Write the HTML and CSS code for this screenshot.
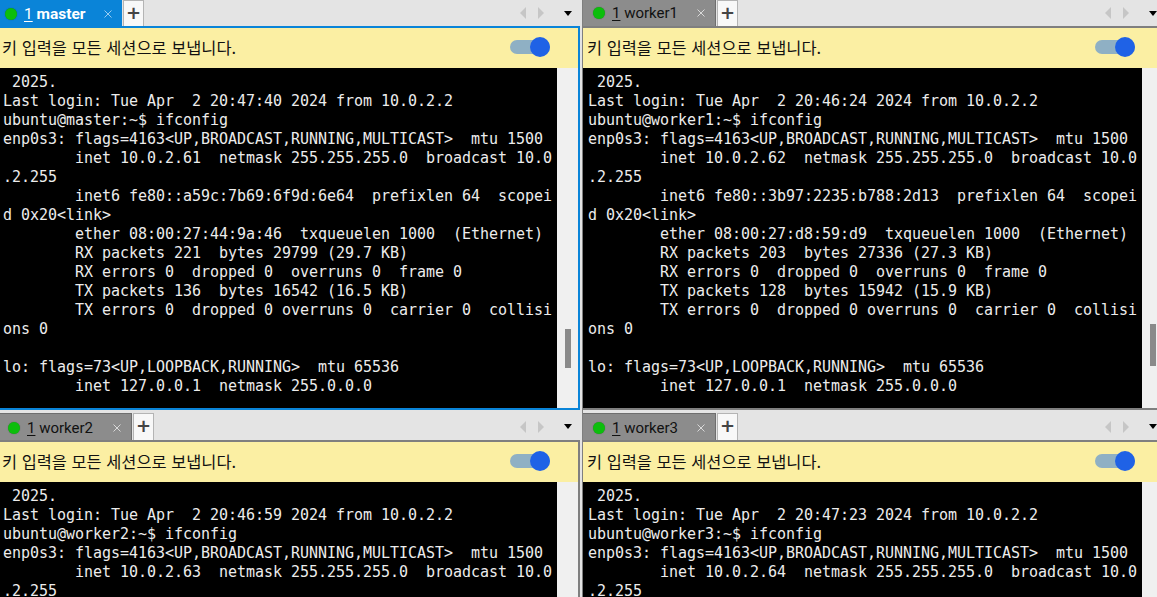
FILE: index.html
```html
<!DOCTYPE html>
<html lang="ko">
<head>
<meta charset="utf-8">
<title>Sessions</title>
<link rel="stylesheet" href="styles.css">
</head>
<body>
<main class="grid">
  <section class="pane pane-top pane-left pane-focus">
    <div class="tabbar">
      <div class="tab tab-active"><span class="dot"></span><span class="title"><u>1</u> master</span><svg class="close" viewBox="0 0 8 8"><path d="M.5.5l7 7M7.5.5l-7 7"/></svg></div>
      <div class="plus">+</div>
      <div class="tabctl"><span class="arr arr-l"></span><span class="arr arr-r"></span><span class="menu"></span></div>
    </div>
    <div class="notice"><span>키 입력을 모든 세션으로 보냅니다.</span><span class="toggle"><span class="knob"></span></span></div>
    <div class="body">
<pre class="term"> 2025.
Last login: Tue Apr  2 20:47:40 2024 from 10.0.2.2
ubuntu@master:~$ ifconfig
enp0s3: flags=4163&lt;UP,BROADCAST,RUNNING,MULTICAST&gt;  mtu 1500
        inet 10.0.2.61  netmask 255.255.255.0  broadcast 10.0
.2.255
        inet6 fe80::a59c:7b69:6f9d:6e64  prefixlen 64  scopei
d 0x20&lt;link&gt;
        ether 08:00:27:44:9a:46  txqueuelen 1000  (Ethernet)
        RX packets 221  bytes 29799 (29.7 KB)
        RX errors 0  dropped 0  overruns 0  frame 0
        TX packets 136  bytes 16542 (16.5 KB)
        TX errors 0  dropped 0 overruns 0  carrier 0  collisi
ons 0

lo: flags=73&lt;UP,LOOPBACK,RUNNING&gt;  mtu 65536
        inet 127.0.0.1  netmask 255.0.0.0</pre>
      <div class="scroll"><span class="thumb"></span></div>
    </div>
  </section>
  <section class="pane pane-top pane-right">
    <div class="tabbar">
      <div class="tab"><span class="dot"></span><span class="title"><u>1</u> worker1</span><svg class="close" viewBox="0 0 8 8"><path d="M.5.5l7 7M7.5.5l-7 7"/></svg></div>
      <div class="plus">+</div>
      <div class="tabctl"><span class="arr arr-l"></span><span class="arr arr-r"></span><span class="menu"></span></div>
    </div>
    <div class="notice"><span>키 입력을 모든 세션으로 보냅니다.</span><span class="toggle"><span class="knob"></span></span></div>
    <div class="body">
<pre class="term"> 2025.
Last login: Tue Apr  2 20:46:24 2024 from 10.0.2.2
ubuntu@worker1:~$ ifconfig
enp0s3: flags=4163&lt;UP,BROADCAST,RUNNING,MULTICAST&gt;  mtu 1500
        inet 10.0.2.62  netmask 255.255.255.0  broadcast 10.0
.2.255
        inet6 fe80::3b97:2235:b788:2d13  prefixlen 64  scopei
d 0x20&lt;link&gt;
        ether 08:00:27:d8:59:d9  txqueuelen 1000  (Ethernet)
        RX packets 203  bytes 27336 (27.3 KB)
        RX errors 0  dropped 0  overruns 0  frame 0
        TX packets 128  bytes 15942 (15.9 KB)
        TX errors 0  dropped 0 overruns 0  carrier 0  collisi
ons 0

lo: flags=73&lt;UP,LOOPBACK,RUNNING&gt;  mtu 65536
        inet 127.0.0.1  netmask 255.0.0.0</pre>
      <div class="scroll"><span class="thumb"></span></div>
    </div>
  </section>
  <section class="pane pane-bottom pane-left">
    <div class="tabbar">
      <div class="tab"><span class="dot"></span><span class="title"><u>1</u> worker2</span><svg class="close" viewBox="0 0 8 8"><path d="M.5.5l7 7M7.5.5l-7 7"/></svg></div>
      <div class="plus">+</div>
      <div class="tabctl"><span class="arr arr-l"></span><span class="arr arr-r"></span><span class="menu"></span></div>
    </div>
    <div class="notice"><span>키 입력을 모든 세션으로 보냅니다.</span><span class="toggle"><span class="knob"></span></span></div>
    <div class="body">
<pre class="term"> 2025.
Last login: Tue Apr  2 20:46:59 2024 from 10.0.2.2
ubuntu@worker2:~$ ifconfig
enp0s3: flags=4163&lt;UP,BROADCAST,RUNNING,MULTICAST&gt;  mtu 1500
        inet 10.0.2.63  netmask 255.255.255.0  broadcast 10.0
.2.255</pre>
      <div class="scroll"></div>
    </div>
  </section>
  <section class="pane pane-bottom pane-right">
    <div class="tabbar">
      <div class="tab"><span class="dot"></span><span class="title"><u>1</u> worker3</span><svg class="close" viewBox="0 0 8 8"><path d="M.5.5l7 7M7.5.5l-7 7"/></svg></div>
      <div class="plus">+</div>
      <div class="tabctl"><span class="arr arr-l"></span><span class="arr arr-r"></span><span class="menu"></span></div>
    </div>
    <div class="notice"><span>키 입력을 모든 세션으로 보냅니다.</span><span class="toggle"><span class="knob"></span></span></div>
    <div class="body">
<pre class="term"> 2025.
Last login: Tue Apr  2 20:47:23 2024 from 10.0.2.2
ubuntu@worker3:~$ ifconfig
enp0s3: flags=4163&lt;UP,BROADCAST,RUNNING,MULTICAST&gt;  mtu 1500
        inet 10.0.2.64  netmask 255.255.255.0  broadcast 10.0
.2.255</pre>
      <div class="scroll"></div>
    </div>
  </section>
</main>
</body>
</html>
```
FILE: styles.css
```css
* { box-sizing: border-box; }
html, body { margin: 0; height: 100%; overflow: hidden; background: #e4e4e4; }
.grid {
  width: 1163px;
  height: 597px;
  display: grid;
  grid-template-columns: 580px 581px;
  grid-template-rows: 410px 187px;
  column-gap: 2px;
  font-family: Roboto, "Noto Sans CJK KR", sans-serif;
}
.pane { display: flex; flex-direction: column; min-width: 0; overflow: hidden; background: #e4e4e4; }
.pane-right { border-left: 1px solid #7f7f7f; }
.pane-bottom { padding-top: 3px; }
.tabbar {
  height: 28px;
  flex: none;
  display: flex;
  align-items: stretch;
  background: #e4e4e4;
  border-bottom: 2px solid #7f7f7f;
}
.pane-bottom .tabbar { height: 29px; }
.pane-left.pane-bottom .notice,
.pane-left.pane-bottom .body { border-right: 2px solid #7f7f7f; }
.pane-focus .notice,
.pane-focus .body { border-right: 2px solid #0a84d8; }
.pane-focus .body { border-bottom: 2px solid #0a84d8; }
.pane-focus .tabbar { border-bottom-color: #0a84d8; }
.pane-top.pane-right .body { border-bottom: 2px solid #7f7f7f; }
.tab {
  width: 133px;
  display: flex;
  align-items: center;
  background: #8c8c8c;
  color: #111;
  font-size: 15px;
  padding-left: 10px;
  border-right: 1px solid #6e6e6e;
}
.pane-bottom .tab { border-top: 1px solid #6e6e6e; padding-top: 1px; }
.pane-left .tab { width: 132px; padding-left: 8px; }
.pane-left .tab-active {
  width: 122px;
  padding-left: 5px;
  background: #0a84d8;
  color: #fff;
  font-size: 15.5px;
  font-weight: 700;
  border-right: 0;
  margin-bottom: -2px;
}
.dot {
  width: 12px;
  height: 12px;
  border-radius: 50%;
  background: #0cbe0c;
  box-shadow: 0 0 1px rgba(0, 0, 0, .45);
  margin-right: 7px;
  flex: none;
}
.title { flex: 1; white-space: nowrap; }
.title u { text-underline-offset: 2px; font-weight: 400; }
.close { width: 8px; height: 8px; margin-right: 10px; flex: none; fill: none; stroke: #e2e2e2; stroke-width: .9; }
.tab-active .close { stroke: #a9d6f5; }
.plus {
  width: 21px;
  margin-left: 1px;
  background: #f8f8f8;
  border: 1px solid #b4b4b4;
  border-bottom: 0;
  color: #444;
  font: 700 18px/24px "DejaVu Sans", sans-serif;
  text-align: center;
}
.tabctl { margin-left: auto; display: flex; align-items: center; padding-right: 8px; }
.pane-right .tabctl { padding-right: 6px; }
.arr { width: 0; height: 0; border-style: solid; border-color: transparent; }
.arr-l { border-width: 6px 6px 6px 0; border-right-color: #c6c6c6; margin-right: 12px; }
.arr-r { border-width: 6px 0 6px 6px; border-left-color: #c6c6c6; margin-right: 20px; }
.menu { width: 0; height: 0; border-style: solid; border-color: #000 transparent transparent; border-width: 5px 4px 0; }
.notice {
  height: 40px;
  flex: none;
  display: flex;
  align-items: center;
  justify-content: space-between;
  padding: 0 28px 2px 2px;
  background: #fbefa3;
  color: #111;
  font: 16.4px "Noto Sans CJK KR", sans-serif;
}
.pane-right .notice { padding-left: 4px; }
.toggle { position: relative; width: 40px; height: 14px; border-radius: 7px; background: #8fb0c4; }
.knob { position: absolute; right: 0; top: -3px; width: 20px; height: 20px; border-radius: 50%; background: #1f62e6; }
.body { flex: 1; min-height: 0; display: flex; background: #000; overflow: hidden; }
.term {
  flex: 1;
  min-width: 0;
  margin: 0;
  padding: 5px 0 0 3px;
  background: #000;
  color: #ececec;
  font: 15px/19px "DejaVu Sans Mono", monospace;
  letter-spacing: -0.03px;
  overflow: hidden;
}
.pane-right .term { padding-left: 5px; }
.scroll { width: 21px; flex: none; background: #f0f0f0; display: flex; justify-content: center; }
.thumb { width: 6px; height: 39px; margin-top: 261px; background: #8a8a8a; }
.pane-right .thumb { height: 42px; margin-top: 256px; }
```
